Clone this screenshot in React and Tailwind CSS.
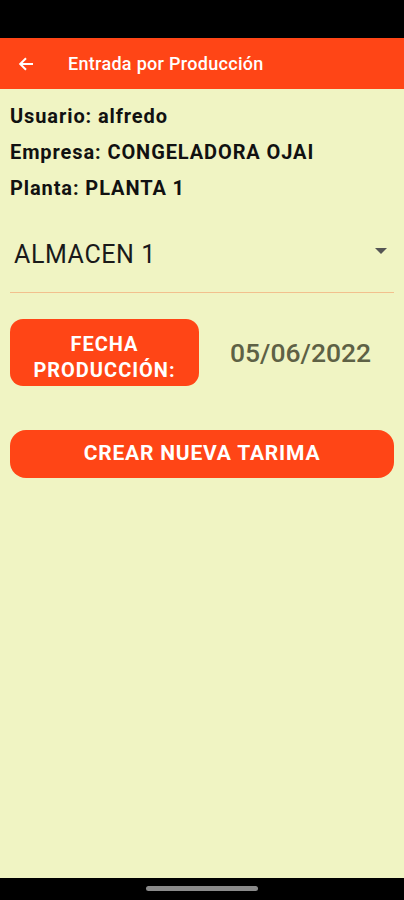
import React from "react";

export default function App() {
  return (
    <div className="w-[404px] h-[900px] flex flex-col bg-[#F0F4C3]" style={{ fontFamily: "Roboto, 'Noto Sans', sans-serif" }}>
      <div className="h-[38px] bg-black shrink-0" />
      <div className="h-[51px] bg-[#FF4516] flex items-center shrink-0">
        <svg width="16" height="16" viewBox="0 0 16 16" className="ml-[18px]">
          <path d="M15 8H2.5M8 2.2L2.2 8L8 13.8" stroke="#fff" strokeWidth="2" fill="none" />
        </svg>
        <span className="ml-[34px] text-white text-[18px] font-medium tracking-[0.3px]">Entrada por Producción</span>
      </div>
      <div className="flex-1 flex flex-col px-[10px]">
        <div className="mt-[9px] flex flex-col text-[20px] font-bold text-[#111] leading-[36px] tracking-[0.9px]">
          <span>Usuario: alfredo</span>
          <span>Empresa: CONGELADORA OJAI</span>
          <span>Planta: PLANTA 1</span>
        </div>
        <div className="mt-[26px] h-[61px] flex items-start justify-between border-b border-[#F2C08E] pl-[4px] pr-[7px] pt-[8px]">
          <span className="text-[25px] leading-[30px] text-[#1a1a1a] tracking-[0.6px]">ALMACEN 1</span>
          <svg width="12" height="7" viewBox="0 0 12 7" className="mt-[8px]">
            <path d="M0 0H12L6 6Z" fill="#555" />
          </svg>
        </div>
        <div className="mt-[26px] flex items-center">
          <div className="w-[189px] h-[67px] rounded-[13px] bg-[#FF4516] flex flex-col items-center justify-center pt-[9px] text-white font-bold text-[20px] leading-[26px] tracking-[1px]">
            <span>FECHA</span>
            <span>PRODUCCIÓN:</span>
          </div>
          <span className="ml-[31px] text-[26.5px] font-medium text-[#5E6145]">05/06/2022</span>
        </div>
        <div className="mt-[44px] h-[48px] rounded-[16px] bg-[#FF4516] flex items-center justify-center text-white font-bold text-[21px] tracking-[0.8px]">
          CREAR NUEVA TARIMA
        </div>
      </div>
      <div className="h-[22px] bg-black shrink-0 flex justify-center pt-[8px]">
        <div className="w-[112px] h-[5px] rounded-full bg-[#8a8a8a]" />
      </div>
    </div>
  );
}
